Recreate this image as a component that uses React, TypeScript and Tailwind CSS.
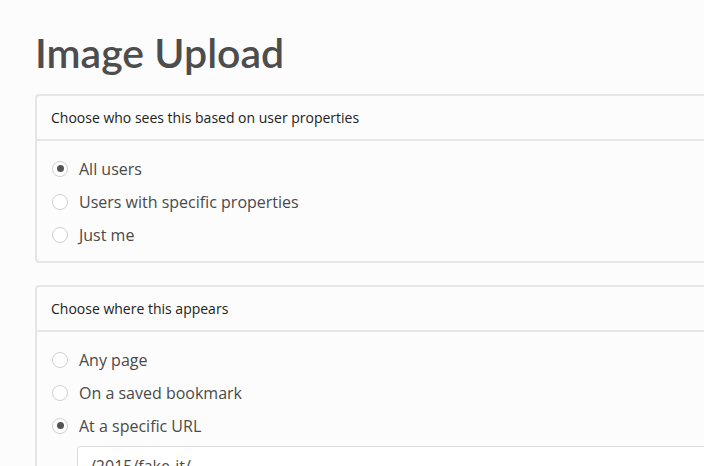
import React from "react";

function Radio({ checked, label }: { checked?: boolean; label: string }) {
  return (
    <div className="flex items-center h-[33px]">
      <span className="w-[16px] h-[16px] rounded-full border border-[#d0d0d0] bg-white flex items-center justify-center">
        {checked && <span className="w-[7px] h-[7px] rounded-full bg-[#555]" />}
      </span>
      <span className="ml-[11px] text-[16px] text-[#4a4a4a]">{label}</span>
    </div>
  );
}

function Card({ title, children }: { title: string; children: React.ReactNode }) {
  return (
    <div className="w-[720px] border-2 border-[#e6e6e6] rounded-[4px] bg-[#fcfcfc]">
      <div className="h-[45px] flex items-center px-[14px] border-b-2 border-[#e6e6e6] text-[14px] text-[#222]">
        {title}
      </div>
      {children}
    </div>
  );
}

export default function App() {
  return (
    <div
      className="w-[704px] h-[466px] overflow-hidden bg-[#fcfcfc] pl-[35px] pt-[27px]"
      style={{ fontFamily: '"Open Sans", sans-serif' }}
    >
      <h1
        className="text-[41px] leading-[52px] font-semibold text-[#4d4d4d]"
        style={{ fontFamily: 'Lato, sans-serif' }}
      >
        Image Upload
      </h1>
      <div className="mt-[15px]">
        <Card title="Choose who sees this based on user properties">
          <div className="px-[15px] pt-[11px] pb-[10px]">
            <Radio checked label="All users" />
            <Radio label="Users with specific properties" />
            <Radio label="Just me" />
          </div>
        </Card>
      </div>
      <div className="mt-[22px]">
        <Card title="Choose where this appears">
          <div className="px-[15px] pt-[11px] pb-[10px]">
            <Radio label="Any page" />
            <Radio label="On a saved bookmark" />
            <Radio checked label="At a specific URL" />
            <div className="ml-[25px] mt-[4px] h-[40px] border border-[#dcdcdc] rounded-[3px] bg-white flex items-center px-[12px] text-[16px] text-[#4a4a4a]">
              /2015/fake-it/
            </div>
          </div>
        </Card>
      </div>
    </div>
  );
}
